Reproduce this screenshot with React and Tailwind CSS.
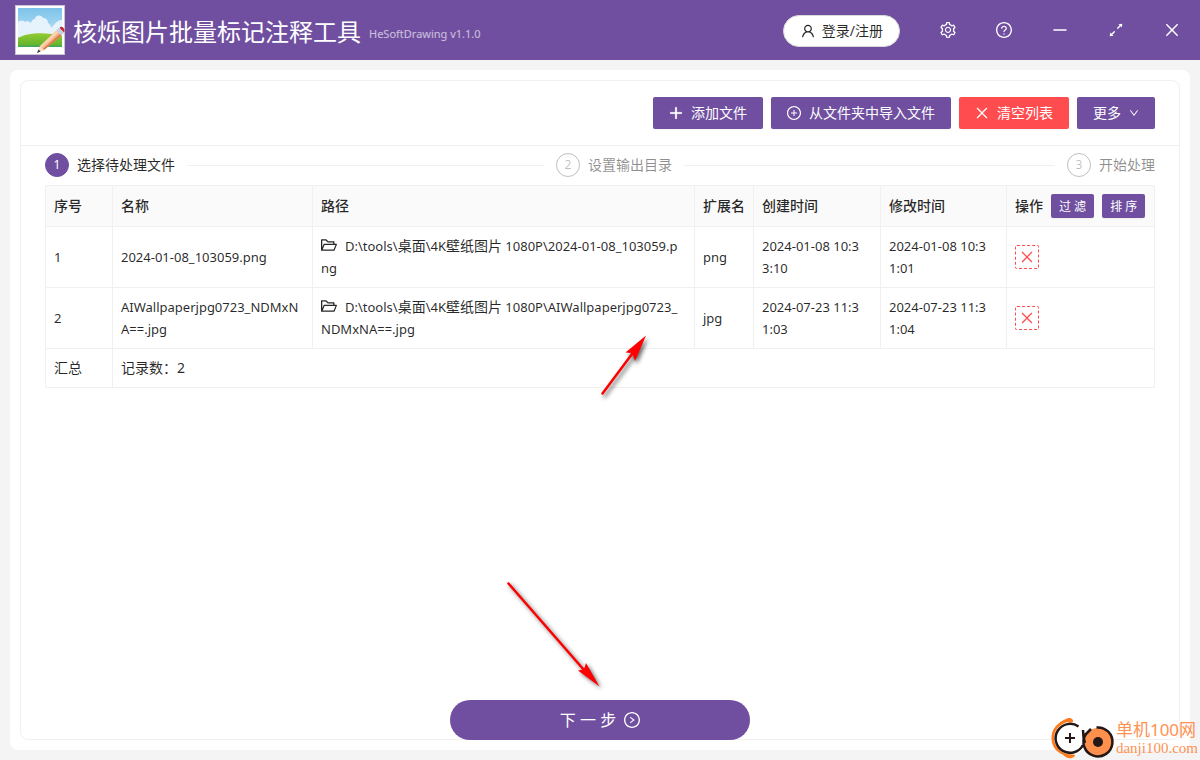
import React from "react";
import {
  AiOutlineUser,
  AiOutlineSetting,
  AiOutlineQuestionCircle,
  AiOutlineMinus,
  AiOutlineExpandAlt,
  AiOutlineClose,
  AiOutlinePlus,
  AiOutlinePlusCircle,
  AiOutlineDown,
  AiOutlineFolderOpen,
  AiOutlineRightCircle,
} from "react-icons/ai";

const files = [
  {
    id: 1,
    name: "2024-01-08_103059.png",
    path: ["D:\\tools\\", "桌面", "\\4K", "壁纸图片", " 1080P\\2024-01-08_103059.png"],
    ext: "png",
    created: "2024-01-08 10:33:10",
    modified: "2024-01-08 10:31:01",
  },
  {
    id: 2,
    name: "AIWallpaperjpg0723_NDMxNA==.jpg",
    path: ["D:\\tools\\", "桌面", "\\4K", "壁纸图片", " 1080P\\AIWallpaperjpg0723_NDMxNA==.jpg"],
    ext: "jpg",
    created: "2024-07-23 11:31:03",
    modified: "2024-07-23 11:31:04",
  },
];

// Trims the empty margin round the glyphs, so that they fill their box.
function Icon({ as: Glyph, bold, className }) {
  return (
    <Glyph viewBox="64 64 896 896" strokeWidth={bold ? 48 : 0} className={className} aria-hidden="true" />
  );
}

function Logo() {
  return (
    <svg viewBox="0 0 50 50" className="size-[50px] shrink-0" aria-hidden="true">
      <defs>
        <linearGradient id="sky" x1="0" y1="0" x2="0" y2="1">
          <stop offset="0" stopColor="#7cc3ea" />
          <stop offset="1" stopColor="#d3ecf8" />
        </linearGradient>
        <linearGradient id="grass" x1="0" y1="0" x2="0" y2="1">
          <stop offset="0" stopColor="#93cb33" />
          <stop offset="0.8" stopColor="#67b62c" />
          <stop offset="1" stopColor="#3aa563" />
        </linearGradient>
      </defs>
      <rect x="0.5" y="0.5" width="49" height="49" fill="#fff" stroke="#c9c4cf" />
      <rect x="3" y="3" width="44" height="39" fill="url(#sky)" />
      <path
        d="M3 32V17c3-2 6-1 7 0 1-1 4-1 6 1 1-3 2-4 4-4 0-4 6-5 8-1 3 0 5 2 5 5 2 1 3 3 3 5 3-2 5-8 11-8v17z"
        fill="#e6f3fd"
      />
      <path d="M3 33c9-6 30-6 44-2v11H3z" fill="url(#grass)" />
      <path d="M22.500 47.500l2.500-6.500L41.500 25.500l5 5L29 45z" fill="#f4b183" />
      <path d="M25 41l16.500-15.500 2 2L27 43z" fill="#fbd2ae" />
      <path d="M29 45l17.500-14.500-1.500-1.500L28 44z" fill="#d97c48" />
      <path d="M22.500 47.500l2.500-6.500 2 2 2 2z" fill="#f8dfc4" />
      <path d="M22 48l1.500-3.500 2 2z" fill="#333" />
      <path d="M41.500 25.500l2.500-2.500 5 5-2.500 2.500z" fill="#c3cfdf" />
      <path d="M44.500 23c1.500-3 6.500.5 4.500 4.500z" fill="#c22a35" />
    </svg>
  );
}

function TitleButton({ label, icon }) {
  return (
    <button type="button" aria-label={label} className="flex h-[60px] w-14 items-center justify-center text-white">
      <Icon as={icon} className="size-4" />
    </button>
  );
}

function ToolButton({ danger, children }) {
  return (
    <button
      type="button"
      className={
        "flex h-8 items-center gap-2 rounded-xs px-4 text-sm text-white shadow-xs " +
        (danger ? "bg-[#ff4d4f]" : "bg-[#704fa0]")
      }
    >
      {children}
    </button>
  );
}

function Step({ number, label, active, last }) {
  return (
    <li className={"flex items-center " + (last ? "shrink-0" : "flex-1")}>
      <span
        className={
          "mr-2 flex size-6 items-center justify-center rounded-full border text-xs " +
          (active ? "border-[#704fa0] bg-[#704fa0] text-white" : "border-black/25 text-black/25")
        }
      >
        {number}
      </span>
      <span className={active ? "text-black/85" : "text-black/45"}>{label}</span>
      {!last && <span aria-hidden="true" className="mx-3 h-px flex-1 bg-[#f0f0f0]" />}
    </li>
  );
}

function SmallButton({ children }) {
  return (
    <button
      type="button"
      className="flex h-6 items-center rounded-xs bg-[#704fa0] px-2 pt-px text-xs font-normal whitespace-nowrap text-white shadow-xs"
    >
      {children}
    </button>
  );
}

function Watermark() {
  return (
    <div className="pointer-events-none absolute right-0 bottom-0 flex items-center text-[#ff9152]">
      <svg viewBox="0 0 66 44" className="h-11 w-[66px]" fill="none" aria-hidden="true">
        <circle cx="20" cy="22" r="17.500" fill="#fff" />
        <path
          d="M23 6c1-3-3-5-6-3.500C8 6 1 13 1.500 23c.5 8 5 13 12 16 3 3.500 8 4.500 11 1.500 1-1 .5-2-1-2C12 39 4.500 31 4 23 3.500 15 9 9 16 6.500c3-.5 5 .5 7-.5z"
          fill="#ff7a1a"
        />
        <path d="M28.500 10.500A14.500 14.500 0 1 0 33 29" stroke="#231815" strokeWidth="2.500" />
        <path d="M20 17v10M15 22h10" stroke="#231815" strokeWidth="2" />
        <circle cx="48" cy="26" r="14" fill="#ff8f4d" />
        <path d="M46.500 11.500A14.500 14.500 0 1 1 35.500 18.500" stroke="#231815" strokeWidth="2.500" />
        <path d="M33 14c0 6 .5 9 2 13M35 19l6-6" stroke="#231815" strokeWidth="2.500" />
        <circle cx="48" cy="26" r="5" fill="#231815" />
      </svg>
      <div className="flex flex-col pr-0.5">
        <span className="text-[17px] leading-5">单机100网</span>
        <span className="font-['Liberation_Serif',serif] text-[15px] leading-4">danji100.com</span>
      </div>
    </div>
  );
}

const cell = "border-r border-b border-[#f0f0f0] pl-2 text-left break-all";

export default function App() {
  return (
    <div className="relative flex min-h-screen flex-col bg-[#f4f4f4] font-['Noto_Sans','Noto_Sans_CJK_SC',sans-serif] text-sm leading-[22px] text-black/85">
      <header className="flex h-[60px] items-center bg-[#704fa0] pl-[15px] text-white">
        <Logo />
        <div className="mt-1 ml-2 flex items-center gap-2">
          <h1 className="text-2xl">核烁图片批量标记注释工具</h1>
          <span className="mt-1 text-[11px] text-white/65">HeSoftDrawing v1.1.0</span>
        </div>
        <div className="ml-auto flex items-center">
          <button
            type="button"
            className="mt-0.5 mr-5 flex h-8 items-center gap-1.5 rounded-full border border-[#d9d9d9] bg-white px-4 text-sm text-black/85"
          >
            <AiOutlineUser className="size-4" aria-hidden="true" />
            登录/注册
          </button>
          <TitleButton label="设置" icon={AiOutlineSetting} />
          <TitleButton label="帮助" icon={AiOutlineQuestionCircle} />
          <TitleButton label="最小化" icon={AiOutlineMinus} />
          <TitleButton label="最大化" icon={AiOutlineExpandAlt} />
          <TitleButton label="关闭" icon={AiOutlineClose} />
        </div>
      </header>

      <main className="m-2.5 flex flex-1 flex-col rounded-lg bg-white p-2.5">
        <section className="flex flex-1 flex-col rounded-lg border border-[#f0f0f0]">
          <div className="flex justify-end gap-2 border-b border-[#f0f0f0] px-6 py-4">
            <ToolButton>
              <Icon as={AiOutlinePlus} bold className="size-3.5" />
              添加文件
            </ToolButton>
            <ToolButton>
              <Icon as={AiOutlinePlusCircle} className="size-3.5" />
              从文件夹中导入文件
            </ToolButton>
            <ToolButton danger>
              <Icon as={AiOutlineClose} className="size-3.5" />
              清空列表
            </ToolButton>
            <ToolButton>
              更多
              <Icon as={AiOutlineDown} className="size-2.5" />
            </ToolButton>
          </div>

          <div className="flex flex-1 flex-col px-6 pt-[7px]">
            <ol className="mb-2 flex items-center">
              <Step number={1} label="选择待处理文件" active />
              <Step number={2} label="设置输出目录" />
              <Step number={3} label="开始处理" last />
            </ol>

            <table className="w-full table-fixed border-separate border-spacing-0 rounded-xs border-t border-l border-[#f0f0f0]">
              <colgroup>
                <col className="w-[67px]" />
                <col className="w-[200px]" />
                <col />
                <col className="w-[59px]" />
                <col className="w-[127px]" />
                <col className="w-[126px]" />
                <col className="w-[148px]" />
              </colgroup>
              <thead className="bg-[#fafafa]">
                <tr className="h-[41px]">
                  {["序号", "名称", "路径", "扩展名", "创建时间", "修改时间"].map((title) => (
                    <th key={title} scope="col" className={cell + " pr-2 font-medium"}>
                      {title}
                    </th>
                  ))}
                  <th scope="col" className={cell + " pr-2 font-medium"}>
                    <div className="flex items-center gap-2 whitespace-nowrap">
                      操作
                      <SmallButton>过 滤</SmallButton>
                      <SmallButton>排 序</SmallButton>
                    </div>
                  </th>
                </tr>
              </thead>
              <tbody className="text-[13px]">
                {files.map((file) => (
                  <tr key={file.id} className="h-[61px]">
                    <td className={cell + " pr-2"}>{file.id}</td>
                    <td className={cell + " pr-2"}>{file.name}</td>
                    <td className={cell + " pr-3"}>
                      <span className="mr-2 mb-1 inline-block align-middle">
                        <Icon as={AiOutlineFolderOpen} className="size-4" />
                      </span>
                      {file.path.map((part, i) =>
                        i % 2 ? (
                          <span key={i} className="text-sm leading-[22px]">
                            {part}
                          </span>
                        ) : (
                          part
                        )
                      )}
                    </td>
                    <td className={cell + " pr-2"}>{file.ext}</td>
                    <td className={cell + " pr-4"}>{file.created}</td>
                    <td className={cell + " pr-4"}>{file.modified}</td>
                    <td className={cell + " pr-2"}>
                      <button
                        type="button"
                        aria-label={"移除 " + file.name}
                        className="flex size-6 items-center justify-center rounded-xs border border-dashed border-[#ff4d4f] text-[#ff4d4f]"
                      >
                        <Icon as={AiOutlineClose} className="size-3.5" />
                      </button>
                    </td>
                  </tr>
                ))}
              </tbody>
              <tfoot>
                <tr className="h-[39px]">
                  <td className={cell + " pr-2"}>汇总</td>
                  <td className={cell + " pr-2"} colSpan={6}>
                    记录数：2
                  </td>
                </tr>
              </tfoot>
            </table>

            <button
              type="button"
              className="mt-auto -mb-px flex h-10 w-[300px] items-center justify-center gap-2 self-center rounded-full bg-[#704fa0] text-base text-white"
            >
              下 一 步
              <Icon as={AiOutlineRightCircle} className="size-4" />
            </button>
          </div>
        </section>
      </main>

      <svg
        viewBox="0 0 60 74"
        className="pointer-events-none absolute top-[328px] left-[596px] h-[74px] w-[60px] drop-shadow-[2px_3px_2px_rgba(0,0,0,0.6)]"
        aria-hidden="true"
      >
        <path d="M6.500 65.500L36 26" stroke="#fe0000" strokeWidth="2.500" strokeLinecap="round" />
        <path d="M50 7.500L29.500 24.500l5.500.5 2 2.500 2 5.500z" fill="#fe0000" />
      </svg>
      <svg
        viewBox="0 0 110 120"
        className="pointer-events-none absolute top-[576px] left-[500px] h-[120px] w-[110px] drop-shadow-[2px_2px_2px_rgba(0,0,0,0.6)]"
        aria-hidden="true"
      >
        <path d="M8.500 7.500L84 94" stroke="#fe0000" strokeWidth="2.500" strokeLinecap="round" />
        <path d="M99.500 110.500L78 94.500l5-1 1.500-1.500 1.500-5z" fill="#fe0000" />
      </svg>
      <Watermark />
    </div>
  );
}
